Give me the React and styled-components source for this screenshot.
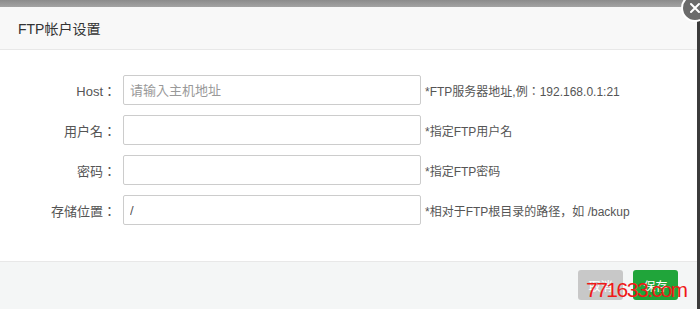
import React from "react";
import styled, { createGlobalStyle } from "styled-components";

const GlobalStyle = createGlobalStyle`
  html, body {
    margin: 0;
    padding: 0;
    background: #3b3b3b;
    font-family: "Liberation Sans", "Noto Sans CJK JP", sans-serif;
    overflow: hidden;
  }
`;

const Backdrop = styled.div`
  width: 700px;
  height: 309px;
  background: linear-gradient(#8c8c8c 0, #a3a3a3 7px, #3b3b3b 7px);
  padding-top: 7px;
  box-sizing: border-box;
  position: relative;
`;

const Dialog = styled.div`
  width: 697px;
  height: 302px;
  background: #fff;
  display: flex;
  flex-direction: column;
`;

const Header = styled.div`
  height: 43px;
  box-sizing: border-box;
  background: #f8f8f8;
  border-bottom: 1px solid #e8e8e8;
  display: flex;
  align-items: center;
  padding-left: 18px;
  font-size: 14px;
  color: #333;
`;

const CloseButton = styled.span`
  position: absolute;
  top: -6px;
  left: 681px;
  width: 24px;
  height: 24px;
  border-radius: 50%;
  background: #6b6b6b;
  border: 2px solid #fff;
  display: flex;
  align-items: center;
  justify-content: center;
`;

const Body = styled.div`
  flex: 1;
  padding-top: 25px;
  display: flex;
  flex-direction: column;
  gap: 10px;
`;

const Row = styled.div`
  display: flex;
  align-items: center;
  height: 30px;
`;

const Label = styled.label`
  width: 116px;
  text-align: right;
  font-size: 13px;
  color: #555;
  margin-right: 7px;
`;

const Input = styled.input`
  width: 298px;
  height: 30px;
  box-sizing: border-box;
  border: 1px solid #ccc;
  border-radius: 2px;
  padding: 0 6px;
  font-size: 13px;
  font-family: inherit;
  color: #555;
  outline: none;
  &::placeholder {
    color: #999;
  }
`;

const Help = styled.span`
  margin-left: 4px;
  font-size: 12px;
  color: #555;
`;

const Footer = styled.div`
  height: 48px;
  box-sizing: border-box;
  background: #f4f6f6;
  border-top: 1px solid #e8e8e8;
  display: flex;
  justify-content: flex-end;
  align-items: flex-start;
  padding: 8px 19px 0 0;
  gap: 10px;
  position: relative;
`;

const Button = styled.button`
  width: 45px;
  height: 30px;
  border: none;
  border-radius: 3px;
  color: #fff;
  font-size: 12px;
  font-family: inherit;
  background: ${(p) => (p.$primary ? "#20a53a" : "#c8c8c8")};
`;

const Watermark = styled.span`
  position: absolute;
  left: 586px;
  top: 17px;
  font-size: 21px;
  line-height: 1;
  letter-spacing: -1.5px;
  color: #f01818;
  font-family: "Liberation Sans", sans-serif;
`;

const fields = [
  { label: "Host：", placeholder: "请输入主机地址", help: "*FTP服务器地址,例：192.168.0.1:21" },
  { label: "用户名：", help: "*指定FTP用户名" },
  { label: "密码：", help: "*指定FTP密码" },
  { label: "存储位置：", value: "/", help: "*相对于FTP根目录的路径，如 /backup" },
];

export default function App() {
  return (
    <>
      <GlobalStyle />
      <Backdrop>
        <Dialog>
          <Header>FTP帐户设置</Header>
          <Body>
            {fields.map((f) => (
              <Row key={f.label}>
                <Label>{f.label}</Label>
                <Input placeholder={f.placeholder} defaultValue={f.value} />
                <Help>{f.help}</Help>
              </Row>
            ))}
          </Body>
          <Footer>
            <Button>取消</Button>
            <Button $primary>保存</Button>
            <Watermark>771633.com</Watermark>
          </Footer>
        </Dialog>
        <CloseButton>
          <svg width="12" height="12" viewBox="0 0 12 12">
            <path d="M2 2L10 10M10 2L2 10" stroke="#fff" strokeWidth="2" strokeLinecap="round" />
          </svg>
        </CloseButton>
      </Backdrop>
    </>
  );
}
